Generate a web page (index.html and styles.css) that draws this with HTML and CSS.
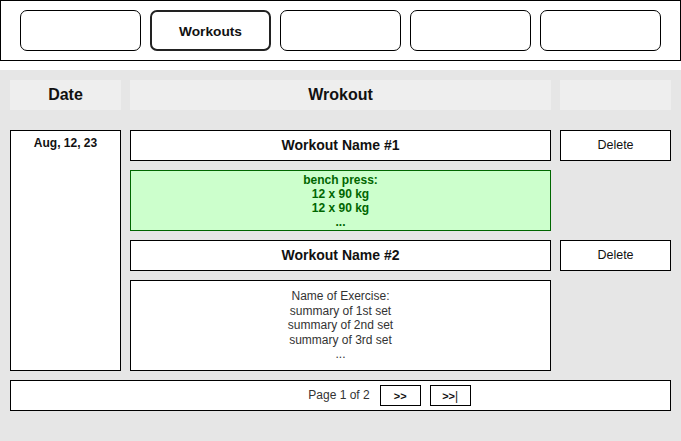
FILE: index.html
```html
<!DOCTYPE html>
<html>
<head>
<meta charset="utf-8">
<link rel="stylesheet" href="styles.css">
</head>
<body>
<nav class="nav">
  <div class="tab"></div>
  <div class="tab tab-active">Workouts</div>
  <div class="tab"></div>
  <div class="tab"></div>
  <div class="tab"></div>
</nav>
<main class="panel">
  <div class="head">
    <div class="head-cell">Date</div>
    <div class="head-cell">Wrokout</div>
    <div class="head-cell"></div>
  </div>
  <div class="body">
    <div class="date">Aug, 12, 23</div>
    <div class="box name name-1">Workout Name #1</div>
    <div class="box del del-1">Delete</div>
    <div class="summary summary-1">bench press:<br>12 x 90 kg<br>12 x 90 kg<br>...</div>
    <div class="box name name-2">Workout Name #2</div>
    <div class="box del del-2">Delete</div>
    <div class="box detail">Name of Exercise:<br>summary of 1st set<br>summary of 2nd set<br>summary of 3rd set<br>...</div>
  </div>
  <div class="pager">
    <div></div>
    <div class="pager-text">Page 1 of 2</div>
    <div class="pager-btns">
      <div class="pbtn">&gt;&gt;</div>
      <div class="pbtn">&gt;&gt;<span class="bar">|</span></div>
    </div>
  </div>
</main>
</body>
</html>
```

FILE: styles.css
```css
* { box-sizing: border-box; }
html, body { margin: 0; padding: 0; background: #fff; }
body {
  width: 681px;
  font-family: "Liberation Sans", Arial, sans-serif;
  color: #000;
}
.nav {
  height: 61px;
  border: 1px solid #000;
  display: flex;
  align-items: center;
  gap: 9px;
  padding-left: 19px;
}
.tab {
  width: 121px;
  height: 41px;
  border: 1px solid #000;
  border-radius: 7px;
  background: #fff;
  display: flex;
  align-items: center;
  justify-content: center;
  font-weight: bold;
  font-size: 13.7px;
  color: #111;
}
.tab-active { border-width: 2px; border-color: #222; padding-top: 1px; }
.panel {
  margin-top: 9px;
  height: 371px;
  background: #e6e6e6;
  padding: 10px;
}
.head {
  display: grid;
  grid-template-columns: 111px 421px 111px;
  column-gap: 9px;
  height: 30px;
  margin-bottom: 20px;
}
.head-cell {
  background: #eeeeee;
  display: flex;
  align-items: center;
  justify-content: center;
  font-weight: bold;
  font-size: 16px;
  color: #111;
}
.body {
  display: grid;
  grid-template-columns: 111px 421px 111px;
  grid-template-rows: 31px 61px 31px 91px;
  gap: 9px;
}
.date {
  grid-column: 1;
  grid-row: 1 / 5;
  background: #fff;
  border: 1px solid #000;
  text-align: center;
  font-weight: bold;
  font-size: 12px;
  line-height: 14px;
  padding-top: 5px;
  color: #111;
}
.box {
  background: #fff;
  border: 1px solid #000;
  display: flex;
  align-items: center;
  justify-content: center;
  text-align: center;
}
.name { grid-column: 2; font-weight: bold; font-size: 14px; color: #111; padding-bottom: 1px; }
.name-1 { grid-row: 1; }
.name-2 { grid-row: 3; }
.del { grid-column: 3; font-size: 12.5px; color: #111; padding-bottom: 1px; }
.del-1 { grid-row: 1; }
.del-2 { grid-row: 3; }
.summary {
  grid-column: 2;
  grid-row: 2;
  background: #ccffcc;
  border: 1px solid #006600;
  color: #006600;
  font-weight: bold;
  font-size: 12px;
  line-height: 14px;
  display: flex;
  align-items: center;
  justify-content: center;
  text-align: center;
}
.detail {
  grid-column: 2;
  grid-row: 4;
  font-size: 12px;
  line-height: 14.5px;
  color: #333;
}
.pager {
  margin-top: 9px;
  height: 31px;
  background: #fff;
  border: 1px solid #000;
  display: grid;
  grid-template-columns: 1fr auto 1fr;
  align-items: center;
  padding-right: 3px;
}
.pager-text { font-size: 12px; color: #333; padding-bottom: 1px; }
.pager-btns {
  display: flex;
  gap: 9px;
  padding-left: 10px;
}
.pbtn {
  width: 41px;
  height: 21px;
  border: 1px solid #000;
  display: flex;
  align-items: center;
  justify-content: center;
  font-size: 11px;
  font-weight: bold;
  color: #111;
}
.bar { font-weight: normal; font-size: 12px; }
```
